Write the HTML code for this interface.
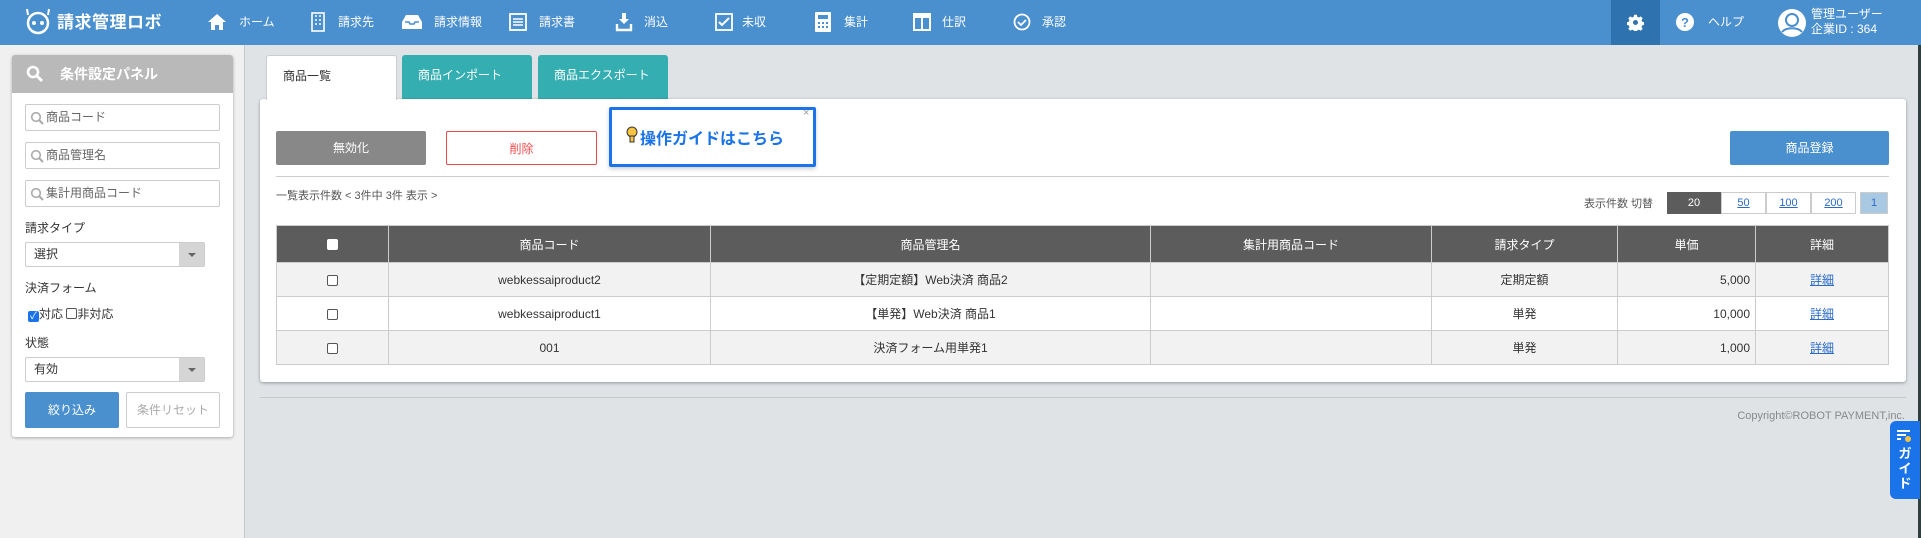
<!DOCTYPE html>
<html><head><meta charset="utf-8">
<style>
*{box-sizing:border-box;margin:0;padding:0}
body{width:1921px;height:538px;overflow:hidden;background:#dfe3e6;font-family:"Liberation Sans","Noto Sans CJK JP",sans-serif;font-size:12px;color:#333;position:relative}
.a{position:absolute}
.hdr{left:0;top:0;width:1921px;height:45px;background:#4a8fce;color:#fff}
.nav{top:0;height:45px;line-height:45px;font-size:12px;color:#fff}
.side{left:0;top:45px;width:245px;height:493px;background:#f0f0f0;border-right:1px solid #c8c8c8}
.panel{left:12px;top:55px;width:221px;height:382px;background:#fff;border-radius:3px;box-shadow:0 1px 3px rgba(0,0,0,.3)}
.ph{left:0;top:0;width:221px;height:38px;background:#b9b9b9;border-radius:3px 3px 0 0;color:#fff;font-weight:bold;font-size:14px;line-height:38px;padding-left:48px}
.inp{left:13px;width:195px;height:27px;border:1px solid #ccc;border-radius:2px;color:#666;font-size:12px;line-height:25px;padding-left:20px}
.lbl{left:13px;font-size:12px;color:#333}
.sel{left:13px;width:180px;height:25px;border:1px solid #ccc;border-radius:2px;font-size:12px;line-height:23px;padding-left:8px;color:#333}
.sel i{position:absolute;right:0;top:0;width:25px;height:23px;background:#d5d5d5}
.sel i:after{content:"";position:absolute;left:9px;top:10px;border:4px solid transparent;border-top:4px solid #666}
.tab{top:55px;height:44px;line-height:40px;padding-left:16px;color:#fff;font-size:12px;background:#35aeb2;border-radius:3px 3px 0 0}
.main{left:260px;top:99px;width:1646px;height:283px;background:#fff;border-radius:3px;box-shadow:0 1px 3px rgba(0,0,0,.35)}
.btn{top:131px;height:34px;line-height:34px;text-align:center;border-radius:2px;font-size:12px}
table{border-collapse:collapse;position:absolute;left:276px;top:225px;width:1613px;font-size:12px}
td,th{border:1px solid #ccc;text-align:center;height:34px;color:#333;font-weight:normal}
th{background:#5c5c5c;color:#fff;height:37px;border-color:#ccc}
tr:nth-child(even) td{background:#f2f2f2}
.cb{display:inline-block;width:11px;height:11px;border:1px solid #555;border-radius:2px;background:#fff;vertical-align:middle}
a{color:#2a6ac8;text-decoration:underline}
.pg{top:192px;height:22px;line-height:20px;text-align:center;border:1px solid #ccc;font-size:11px}
</style></head><body>
<div class="a hdr">
 <svg class="a" style="left:22px;top:7px" width="32" height="28" viewBox="0 0 32 28"><circle cx="16" cy="16" r="10" fill="none" stroke="#fff" stroke-width="2.5"/><circle cx="12" cy="16" r="2" fill="#fff"/><circle cx="20" cy="16" r="2" fill="#fff"/><line x1="5" y1="2" x2="6" y2="8" stroke="#fff" stroke-width="2"/><line x1="27" y1="2" x2="26" y2="8" stroke="#fff" stroke-width="2"/></svg>
 <div class="a" style="left:57px;top:0;line-height:45px;font-size:17px;font-weight:bold;letter-spacing:0.5px">請求管理ロボ</div>
 <svg class="a" style="left:207px;top:13px" width="20" height="18" viewBox="0 0 20 18"><path d="M10 1L1 9h3v8h4v-5h4v5h4V9h3z" fill="#fff"/></svg><div class="a nav" style="left:239px">ホーム</div>
 <svg class="a" style="left:311px;top:12px" width="14" height="20" viewBox="0 0 14 20"><rect x="1" y="1" width="12" height="18" fill="none" stroke="#fff" stroke-width="1.6"/><path d="M4 4h2M8 4h2M4 8h2M8 8h2M4 12h2M8 12h2" stroke="#fff" stroke-width="1.6"/></svg><div class="a nav" style="left:338px">請求先</div>
 <svg class="a" style="left:401px;top:14px" width="22" height="16" viewBox="0 0 22 16"><path d="M1 8L5 1h12l4 7v7H1z" fill="#fff"/><path d="M4 8h4l1 2h4l1-2h4" stroke="#4a8fce" stroke-width="1.6" fill="none"/></svg><div class="a nav" style="left:434px">請求情報</div>
 <svg class="a" style="left:509px;top:13px" width="18" height="18" viewBox="0 0 18 18"><rect x="1" y="1" width="16" height="16" fill="none" stroke="#fff" stroke-width="1.8"/><path d="M4 6h10M4 9h10M4 12h10" stroke="#fff" stroke-width="1.5"/></svg><div class="a nav" style="left:539px">請求書</div>
 <svg class="a" style="left:615px;top:12px" width="18" height="20" viewBox="0 0 18 20"><path d="M7 1h4v6h3l-5 5-5-5h3z" fill="#fff"/><path d="M2 12v6h14v-6" stroke="#fff" stroke-width="2.4" fill="none"/></svg><div class="a nav" style="left:644px">消込</div>
 <svg class="a" style="left:715px;top:13px" width="18" height="18" viewBox="0 0 18 18"><rect x="1" y="1" width="16" height="16" fill="none" stroke="#fff" stroke-width="1.8"/><path d="M4 9l3 3 7-7" stroke="#fff" stroke-width="2" fill="none"/></svg><div class="a nav" style="left:742px">未収</div>
 <svg class="a" style="left:815px;top:12px" width="16" height="20" viewBox="0 0 16 20"><rect x="0" y="0" width="16" height="20" rx="1" fill="#fff"/><rect x="3" y="3" width="10" height="4" fill="#4a8fce"/><path d="M3 10h2v2H3zM7 10h2v2H7zM11 10h2v2h-2zM3 14h2v2H3zM7 14h2v2H7zM11 14h2v2h-2z" fill="#4a8fce"/></svg><div class="a nav" style="left:844px">集計</div>
 <svg class="a" style="left:913px;top:13px" width="18" height="18" viewBox="0 0 18 18"><rect x="1" y="1" width="16" height="16" fill="none" stroke="#fff" stroke-width="2"/><rect x="1" y="1" width="16" height="4" fill="#fff"/><path d="M9 4v13" stroke="#fff" stroke-width="2"/></svg><div class="a nav" style="left:942px">仕訳</div>
 <svg class="a" style="left:1013px;top:13px" width="18" height="18" viewBox="0 0 18 18"><circle cx="9" cy="9" r="7.5" fill="none" stroke="#fff" stroke-width="1.8"/><path d="M5 9l3 3 5-5" stroke="#fff" stroke-width="1.8" fill="none"/></svg><div class="a nav" style="left:1042px">承認</div>
 <div class="a" style="left:1611px;top:0;width:49px;height:45px;background:#2f72b0"></div>
 <svg class="a" style="left:1627px;top:14px" width="17" height="17" viewBox="0 0 24 24"><path fill="#fff" d="M10 1h4l.6 3 2.2 1 2.6-1.7 2.8 2.8-1.7 2.6 1 2.2 3 .6v4l-3 .6-1 2.2 1.7 2.6-2.8 2.8-2.600-1.7-2.2 1-.6 3h-4l-.6-3-2.2-1-2.6 1.7-2.8-2.8 1.7-2.6-1-2.2-3-.6v-4l3-.6 1-2.2-1.7-2.6 2.8-2.8 2.6 1.7 2.2-1zM12 8.5a3.5 3.5 0 100 7 3.5 3.5 0 000-7z"/></svg>
 <svg class="a" style="left:1676px;top:13px" width="18" height="18" viewBox="0 0 18 18"><circle cx="9" cy="9" r="9" fill="#fff"/><text x="9" y="14" text-anchor="middle" font-size="13" font-weight="bold" fill="#4a8fce" font-family="Liberation Sans">?</text></svg>
 <div class="a nav" style="left:1708px">ヘルプ</div>
 <svg class="a" style="left:1777px;top:8px" width="30" height="30" viewBox="0 0 30 30"><circle cx="15" cy="15" r="14" fill="#fff"/><circle cx="15" cy="12" r="6" fill="none" stroke="#4a8fce" stroke-width="2"/><path d="M5 24c4-5 16-5 20 0" stroke="#4a8fce" stroke-width="2" fill="none"/></svg>
 <div class="a" style="left:1811px;top:7px;font-size:12px;line-height:15px">管理ユーザー<br>企業ID : 364</div>
</div>
<div class="a" style="left:1918px;top:45px;width:3px;height:493px;background:#2f3f3f"></div>

<div class="a side"></div>
<div class="a panel">
 <div class="a ph">条件設定パネル</div>
 <svg class="a" style="left:14px;top:10px" width="18" height="18" viewBox="0 0 18 18"><circle cx="7" cy="7" r="5" fill="none" stroke="#fff" stroke-width="2.6"/><path d="M11 11l5 5" stroke="#fff" stroke-width="3"/></svg>
 <div class="a inp" style="top:49px">商品コード</div>
 <div class="a inp" style="top:87px">商品管理名</div>
 <div class="a inp" style="top:125px">集計用商品コード</div>
 <svg class="a" style="left:18px;top:56px" width="14" height="14" viewBox="0 0 14 14"><circle cx="6" cy="6" r="4.3" fill="none" stroke="#aaa" stroke-width="1.6"/><path d="M9 9l4 4" stroke="#aaa" stroke-width="2"/></svg>
 <svg class="a" style="left:18px;top:94px" width="14" height="14" viewBox="0 0 14 14"><circle cx="6" cy="6" r="4.3" fill="none" stroke="#aaa" stroke-width="1.6"/><path d="M9 9l4 4" stroke="#aaa" stroke-width="2"/></svg>
 <svg class="a" style="left:18px;top:132px" width="14" height="14" viewBox="0 0 14 14"><circle cx="6" cy="6" r="4.3" fill="none" stroke="#aaa" stroke-width="1.6"/><path d="M9 9l4 4" stroke="#aaa" stroke-width="2"/></svg>
 <div class="a lbl" style="top:164px">請求タイプ</div>
 <div class="a sel" style="top:187px">選択<i></i></div>
 <div class="a lbl" style="top:224px">決済フォーム</div>
 <div class="a" style="left:16px;top:252px;font-size:12px;line-height:14px"><span style="display:inline-block;width:11px;height:11px;background:#1a73e8;border-radius:2px;vertical-align:-1px;color:#fff;font-size:10px;line-height:11px;text-align:center">✓</span>対応 <span class="cb" style="vertical-align:-1px"></span>非対応</div>
 <div class="a lbl" style="top:279px">状態</div>
 <div class="a sel" style="top:302px">有効<i></i></div>
 <div class="a" style="left:13px;top:337px;width:94px;height:36px;background:#4a8fce;color:#fff;border-radius:2px;text-align:center;line-height:36px;font-size:12px">絞り込み</div>
 <div class="a" style="left:114px;top:337px;width:94px;height:36px;border:1px solid #ccc;color:#aaa;border-radius:2px;text-align:center;line-height:34px;font-size:12px">条件リセット</div>
</div>

<div class="a tab" style="left:266px;width:131px;background:#fff;color:#333;border:1px solid #ccc;border-bottom:none;height:45px;z-index:2">商品一覧</div>
<div class="a tab" style="left:402px;width:130px">商品インポート</div>
<div class="a tab" style="left:538px;width:130px">商品エクスポート</div>
<div class="a main"></div>
<div class="a btn" style="left:276px;width:150px;background:#888;color:#fff">無効化</div>
<div class="a btn" style="left:446px;width:151px;border:1px solid #f04848;color:#f04848;background:#fff">削除</div>
<div class="a" style="left:609px;top:107px;width:207px;height:60px;border:3px solid #1a73e8;border-radius:2px;background:#fff;box-shadow:0 2px 4px rgba(0,0,0,.2)"></div>
<div class="a" style="left:803px;top:107px;color:#999;font-size:11px">×</div>
<svg class="a" style="left:626px;top:126px" width="12" height="18" viewBox="0 0 12 18"><circle cx="6" cy="6" r="5" fill="#f6c343" stroke="#333" stroke-width="1"/><rect x="4" y="10" width="4" height="6" fill="#f6c343" stroke="#333" stroke-width="1"/></svg>
<div class="a" style="left:640px;top:125px;font-size:16px;font-weight:bold;color:#1a73e8">操作ガイドはこちら</div>
<div class="a btn" style="left:1730px;width:159px;background:#4a8fce;color:#fff">商品登録</div>
<div class="a" style="left:276px;top:176px;width:1613px;height:1px;background:#ccc"></div>
<div class="a" style="left:276px;top:187px;font-size:11px;color:#555">一覧表示件数 &lt; 3件中 3件 表示 &gt;</div>
<div class="a" style="left:1584px;top:195px;font-size:11px;color:#555">表示件数 切替</div>
<div class="a pg" style="left:1667px;width:54px;background:#5c5c5c;color:#fff;border-color:#5c5c5c">20</div>
<div class="a pg" style="left:1721px;width:45px;background:#fff"><a>50</a></div>
<div class="a pg" style="left:1766px;width:45px;background:#fff"><a>100</a></div>
<div class="a pg" style="left:1811px;width:45px;background:#fff"><a>200</a></div>
<div class="a pg" style="left:1860px;width:28px;background:#a9c8e2;color:#2a6ac8">1</div>
<table>
<tr><th style="width:112px"><span class="cb" style="border-color:#fff"></span></th><th style="width:322px">商品コード</th><th style="width:440px">商品管理名</th><th style="width:281px">集計用商品コード</th><th style="width:186px">請求タイプ</th><th style="width:138px">単価</th><th>詳細</th></tr>
<tr><td><span class="cb"></span></td><td>webkessaiproduct2</td><td>【定期定額】Web決済 商品2</td><td></td><td>定期定額</td><td style="text-align:right;padding-right:5px">5,000</td><td><a>詳細</a></td></tr>
<tr><td><span class="cb"></span></td><td>webkessaiproduct1</td><td>【単発】Web決済 商品1</td><td></td><td>単発</td><td style="text-align:right;padding-right:5px">10,000</td><td><a>詳細</a></td></tr>
<tr><td><span class="cb"></span></td><td>001</td><td>決済フォーム用単発1</td><td></td><td>単発</td><td style="text-align:right;padding-right:5px">1,000</td><td><a>詳細</a></td></tr>
</table>
<div class="a" style="left:260px;top:397px;width:1646px;height:1px;background:#c8c8c8"></div>
<div class="a" style="left:1700px;top:410px;width:205px;text-align:right;font-size:11px;color:#888">Copyright©ROBOT PAYMENT,inc.</div>
<div class="a" style="left:1890px;top:421px;width:30px;height:78px;background:#1a73e8;border-radius:6px 0 0 6px;color:#fff"></div>
<svg class="a" style="left:1897px;top:429px" width="16" height="14" viewBox="0 0 16 14"><path d="M0 2h13M0 6h9M0 10h4" stroke="#fff" stroke-width="2"/><circle cx="11" cy="10" r="3" fill="#f6c343"/></svg>
<div class="a" style="left:1896px;top:446px;width:18px;font-size:13px;font-weight:bold;color:#fff;line-height:15px;text-align:center">ガ<br>イ<br>ド</div>
</body></html>
